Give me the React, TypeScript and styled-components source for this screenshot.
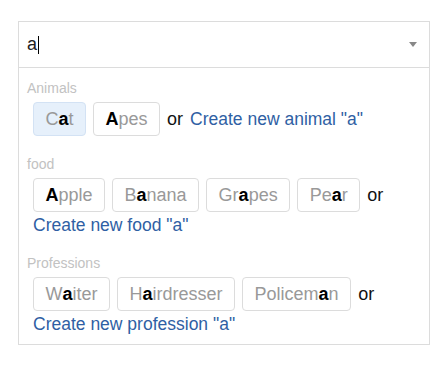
import React from "react";
import styled, { createGlobalStyle } from "styled-components";

const Global = createGlobalStyle`
  body {
    margin: 0;
    background: #fff;
    font-family: "Liberation Sans", Arial, sans-serif;
  }
`;

const Page = styled.div`
  padding: 21px 0 0 18px;
`;

const Select = styled.div`
  width: 412px;
  box-sizing: border-box;
  border: 1px solid #dcdcdc;
  background: #fff;
`;

const InputRow = styled.div`
  height: 46px;
  box-sizing: border-box;
  border-bottom: 1px solid #dcdcdc;
  display: flex;
  align-items: center;
  justify-content: space-between;
  padding: 0 12px 0 8px;
`;

const InputText = styled.div`
  display: flex;
  align-items: center;
  font-size: 18px;
  color: #222;
`;

const Caret = styled.span`
  display: inline-block;
  width: 0;
  height: 18px;
  border-left: 1px solid #000;
  margin-left: 1px;
`;

const Arrow = styled.span`
  width: 0;
  height: 0;
  border-left: 4.5px solid transparent;
  border-right: 4.5px solid transparent;
  border-top: 5px solid #888;
`;

const Menu = styled.div`
  padding: 11px 0 10px;
`;

const Group = styled.div`
  & + & {
    margin-top: 19px;
  }
`;

const GroupLabel = styled.div`
  font-size: 14px;
  line-height: 18px;
  color: #c2c2c2;
  padding-left: 8px;
`;

const Options = styled.div`
  display: flex;
  flex-wrap: wrap;
  align-items: center;
  column-gap: 7px;
  row-gap: 3px;
  padding: 0 8px 0 14px;
  margin-top: 5px;
`;

const Option = styled.div<{ $active?: boolean }>`
  height: 34px;
  box-sizing: border-box;
  display: flex;
  align-items: center;
  padding: 0 11.5px;
  font-size: 18px;
  color: #999;
  border: 1px solid ${(p) => (p.$active ? "#d3e2f4" : "#dcdcdc")};
  background: ${(p) => (p.$active ? "#e6f0fb" : "#fff")};
  border-radius: 4px;
  white-space: pre;
`;

const Match = styled.b`
  color: #000;
  font-weight: bold;
`;

const Or = styled.span`
  font-size: 18px;
  color: #111;
`;

const CreateLink = styled.a`
  font-size: 17.5px;
  line-height: 20px;
  color: #2f5fa4;
  text-decoration: none;
  cursor: pointer;
`;

const query = "a";

function Highlight({ text }: { text: string }) {
  const i = text.toLowerCase().indexOf(query);
  if (i < 0) return <>{text}</>;
  return (
    <>
      {text.slice(0, i)}
      <Match>{text.slice(i, i + query.length)}</Match>
      {text.slice(i + query.length)}
    </>
  );
}

const groups = [
  { label: "Animals", noun: "animal", items: ["Cat", "Apes"], active: "Cat" },
  { label: "food", noun: "food", items: ["Apple", "Banana", "Grapes", "Pear"] },
  {
    label: "Professions",
    noun: "profession",
    items: ["Waiter", "Hairdresser", "Policeman"],
  },
];

export default function App() {
  return (
    <Page>
      <Global />
      <Select>
        <InputRow>
          <InputText>
            {query}
            <Caret />
          </InputText>
          <Arrow />
        </InputRow>
        <Menu>
          {groups.map((g) => (
            <Group key={g.label}>
              <GroupLabel>{g.label}</GroupLabel>
              <Options>
                {g.items.map((it) => (
                  <Option key={it} $active={g.active === it}>
                    <Highlight text={it} />
                  </Option>
                ))}
                <Or>or</Or>
                <CreateLink>Create new {g.noun} "{query}"</CreateLink>
              </Options>
            </Group>
          ))}
        </Menu>
      </Select>
    </Page>
  );
}
